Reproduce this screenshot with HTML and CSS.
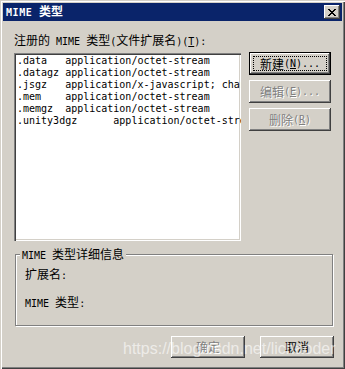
FILE: index.html
```html
<!DOCTYPE html>
<html lang="zh-CN">
<head>
<meta charset="utf-8">
<title>MIME 类型</title>
<link rel="stylesheet" href="styles.css">
</head>
<body>
<div class="win">
  <div class="title">
    <span class="ttext"><span class="a">MIME </span>类型</span>
    <div class="close">
      <svg width="8" height="7" viewBox="0 0 8 7" shape-rendering="crispEdges">
        <g fill="#000">
          <rect x="0" y="0" width="2" height="1"/><rect x="6" y="0" width="2" height="1"/>
          <rect x="1" y="1" width="2" height="1"/><rect x="5" y="1" width="2" height="1"/>
          <rect x="2" y="2" width="4" height="1"/>
          <rect x="3" y="3" width="2" height="1"/>
          <rect x="2" y="4" width="4" height="1"/>
          <rect x="1" y="5" width="2" height="1"/><rect x="5" y="5" width="2" height="1"/>
          <rect x="0" y="6" width="2" height="1"/><rect x="6" y="6" width="2" height="1"/>
        </g>
      </svg>
    </div>
  </div>
  <div class="content">
    <div class="lbl">注册的<span class="a"> MIME </span>类型<span class="a">(</span>文件扩展名<span class="a">)(<u>T</u>):</span></div>
    <div class="row">
      <div class="list">
        <div class="item">.data   application/octet-stream</div>
        <div class="item">.datagz application/octet-stream</div>
        <div class="item">.jsgz   application/x-javascript; charset=UTF-8</div>
        <div class="item">.mem    application/octet-stream</div>
        <div class="item">.memgz  application/octet-stream</div>
        <div class="item">.unity3dgz      application/octet-stream</div>
      </div>
      <div class="btns">
        <div class="btn default">新建<span class="a">(<u>N</u>)...</span></div>
        <div class="btn disabled">编辑<span class="a">(<u>E</u>)...</span></div>
        <div class="btn disabled">删除<span class="a">(<u>R</u>)</span></div>
      </div>
    </div>
    <div class="grp">
      <span class="legend"><span class="a">MIME </span>类型详细信息</span>
      <div class="field">扩展名<span class="a">:</span></div>
      <div class="field"><span class="a">MIME </span>类型<span class="a">:</span></div>
    </div>
    <div class="foot">
      <div class="btn wide disabled">确定</div>
      <div class="btn wide">取消</div>
    </div>
  </div>
  <div class="wm">https://blog.csdn.net/lichaoder</div>
</div>
</body>
</html>
```

FILE: styles.css
```css
html, body {
  margin: 0;
  padding: 0;
}
body {
  width: 345px;
  height: 369px;
  overflow: hidden;
  background: #d4d0c8;
  font-family: "Noto Sans CJK SC", sans-serif;
  font-size: 12px;
  color: #000;
}
.a {
  font-family: "DejaVu Sans Mono", monospace;
  font-size: 10px;
}
u {
  text-decoration: underline;
  text-underline-offset: 1px;
}
.win {
  position: relative;
  width: 345px;
  height: 369px;
  box-sizing: border-box;
  padding: 3px 3px 0 3px;
  box-shadow: inset 1px 1px 0 #d4d0c8, inset 2px 2px 0 #ffffff, inset -1px -1px 0 #404040, inset -2px -2px 0 #808080;
}
.title {
  height: 18px;
  background: #0a246a;
  display: flex;
  align-items: center;
  justify-content: space-between;
}
.ttext {
  color: #fff;
  font-weight: bold;
  padding-left: 3px;
  line-height: 14px;
}
.ttext .a {
  font-weight: bold;
  letter-spacing: 0.6px;
}
.close {
  width: 16px;
  height: 14px;
  margin-right: 2px;
  background: #d4d0c8;
  box-shadow: inset -1px -1px 0 #404040, inset 1px 1px 0 #fff, inset -2px -2px 0 #808080;
  display: flex;
  align-items: center;
  justify-content: center;
}
.close svg {
  display: block;
  margin-left: -1px;
}
.content {
  padding: 0 8px 0 11px;
}
.lbl {
  margin-top: 12px;
  line-height: 14px;
  height: 14px;
  white-space: nowrap;
}
.row {
  display: flex;
  align-items: flex-start;
  margin-top: 6px;
}
.list {
  width: 227px;
  height: 188px;
  box-sizing: border-box;
  background: #fff;
  padding: 1px 0 0 1px;
  overflow: hidden;
  box-shadow: inset 1px 1px 0 #808080, inset 2px 2px 0 #404040, inset -1px -1px 0 #fff, inset -2px -2px 0 #d4d0c8;
  border: 0;
  padding-top: 2px;
  padding-left: 3px;
}
.item {
  font-family: "DejaVu Sans Mono", monospace;
  font-size: 10px;
  line-height: 12px;
  height: 12px;
  white-space: pre;
}
.btns {
  display: flex;
  flex-direction: column;
  gap: 5px;
  margin-left: 8px;
  margin-top: -1px;
}
.btn {
  position: relative;
  width: 82px;
  height: 23px;
  box-sizing: border-box;
  background: #d4d0c8;
  box-shadow: inset -1px -1px 0 #404040, inset 1px 1px 0 #fff, inset -2px -2px 0 #808080;
  display: flex;
  align-items: center;
  justify-content: center;
  line-height: 14px;
  white-space: nowrap;
}
.btn.default {
  box-shadow: inset 0 0 0 1px #000, inset -2px -2px 0 #404040, inset 2px 2px 0 #fff, inset -3px -3px 0 #808080;
}
.btn.default::after {
  content: "";
  position: absolute;
  left: 4px;
  top: 4px;
  right: 4px;
  bottom: 4px;
  border: 1px dotted #000;
}
.btn.disabled {
  color: #808080;
  text-shadow: 1px 1px 0 #fff;
}
.grp {
  position: relative;
  margin-top: 13px;
  margin-left: 1px;
  width: 318px;
  height: 72px;
  box-sizing: border-box;
  border: 1px solid #808080;
  box-shadow: 1px 1px 0 #fff, inset 1px 1px 0 #fff;
  padding: 12px 0 0 9px;
}
.legend {
  position: absolute;
  left: 4px;
  top: -8px;
  padding: 0 2px;
  background: #d4d0c8;
  line-height: 14px;
  white-space: nowrap;
}
.field {
  line-height: 14px;
  height: 14px;
  margin-bottom: 14px;
  white-space: nowrap;
}
.foot {
  display: flex;
  justify-content: flex-end;
  gap: 15px;
  margin-top: 10px;
}
.btn.wide {
  width: 74px;
  height: 22px;
}
.wm {
  position: absolute;
  left: 123px;
  top: 341px;
  font-family: "Liberation Sans", Arial, sans-serif;
  font-size: 16px;
  line-height: 16px;
  color: rgba(255, 255, 255, 0.6);
  white-space: nowrap;
  pointer-events: none;
}
```
